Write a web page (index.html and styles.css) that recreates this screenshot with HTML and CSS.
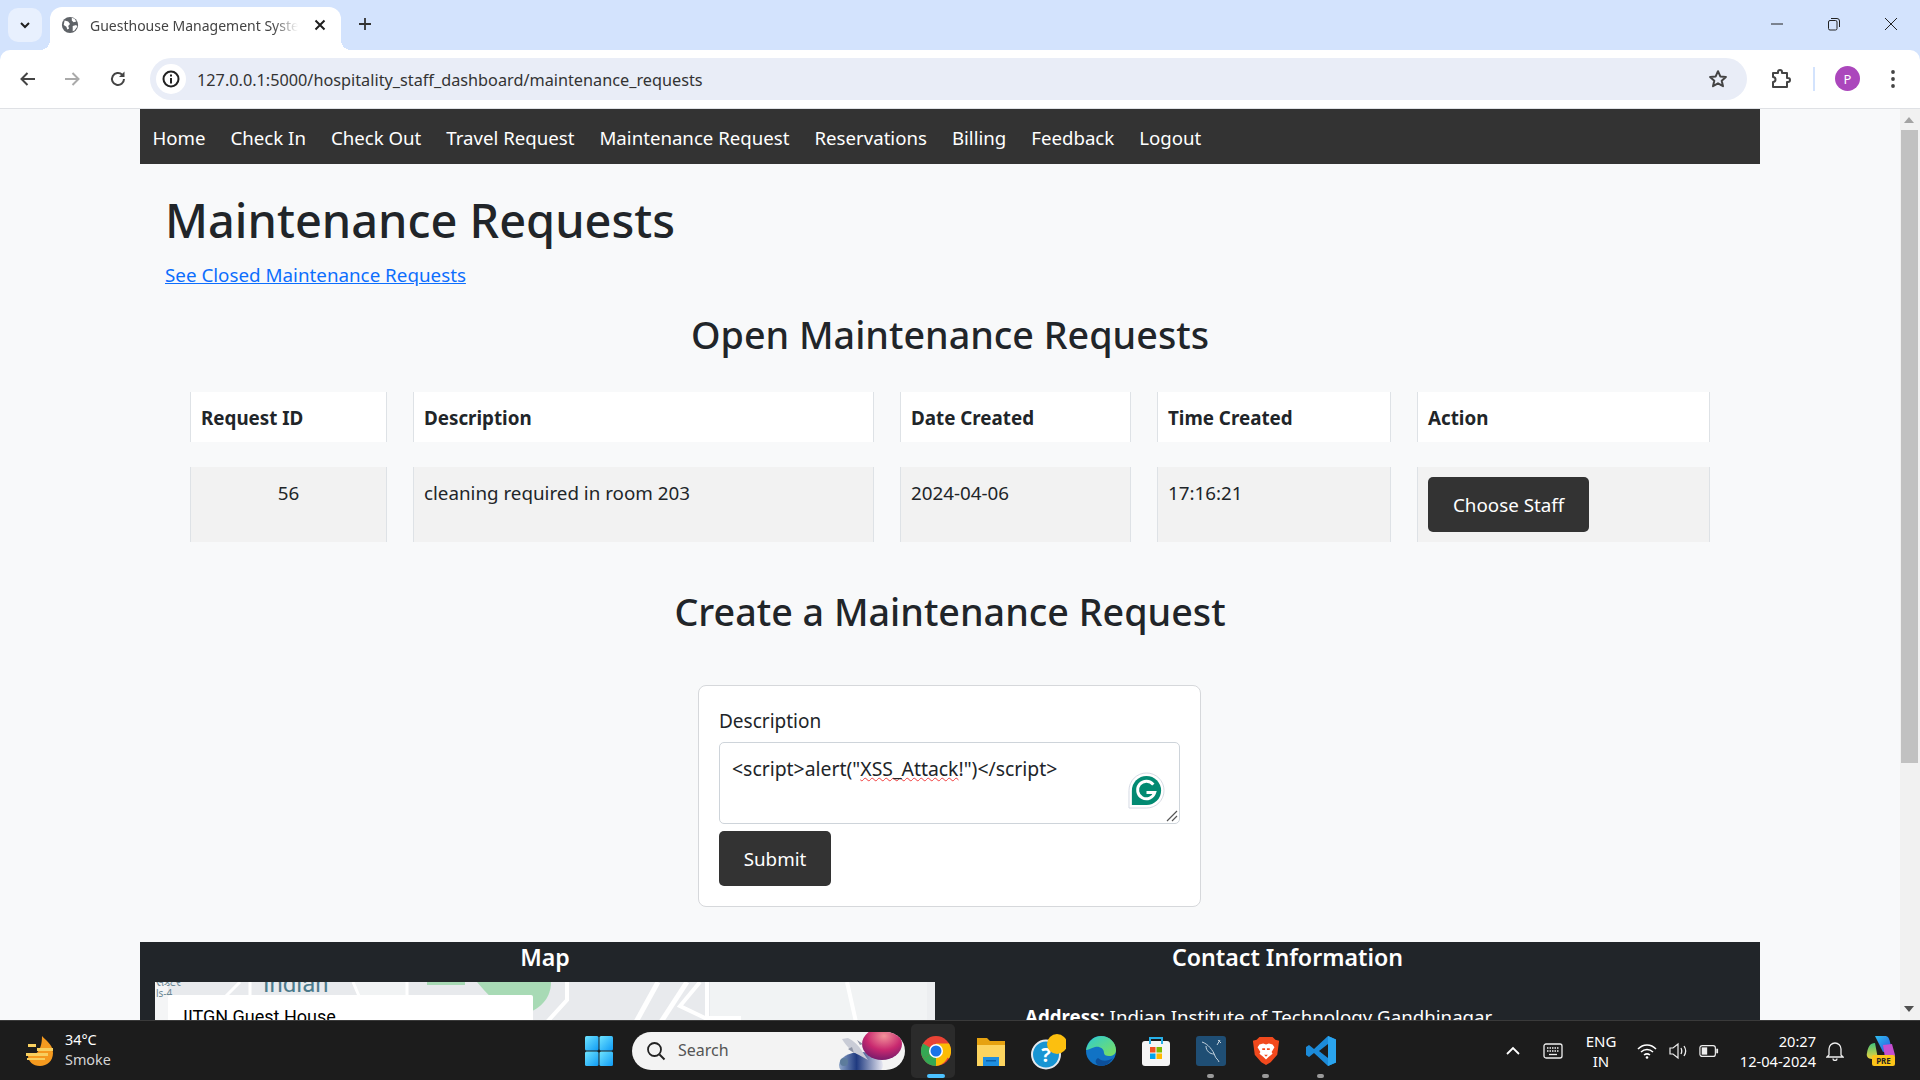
FILE: index.html
```html
<!DOCTYPE html>
<html lang="en">
<head>
<meta charset="UTF-8" />
<meta name="viewport" content="width=device-width, initial-scale=1" />
<title>Guesthouse Management System</title>
<link rel="stylesheet" href="styles.css">
</head>
<body>
  <!-- Browser tab strip -->
  <div class="tabstrip">
    <button class="tab-search" aria-label="Search tabs">
      <svg viewBox="0 0 16 16" class="icon-s"><path d="M4 6l4 4 4-4" fill="none" stroke="#1f1f1f" stroke-width="2"/></svg>
    </button>
    <div class="tab">
      <svg viewBox="0 0 20 20" class="favicon">
        <circle cx="10" cy="10" r="9" fill="#5f6368"/>
        <path d="M4 5l4 1 2 3-2 2 1 3-2 1-1-3-3-2zM12 2l3 1 2 3-3 1-2-2zM13 11l4-1 1 2-3 4-2 1z" fill="#fff"/>
      </svg>
      <span class="tab-title">Guesthouse Management System</span>
      <svg viewBox="0 0 16 16" class="icon-s tab-close"><path d="M3.5 3.5l9 9M12.5 3.5l-9 9" stroke="#1f1f1f" stroke-width="2"/></svg>
    </div>
    <svg viewBox="0 0 16 16" class="icon-s new-tab"><path d="M8 2v12M2 8h12" stroke="#333" stroke-width="1.8"/></svg>
    <div class="window-controls">
      <svg viewBox="0 0 14 14" class="win-icon"><path d="M1 7h12" stroke="#222" stroke-width="1"/></svg>
      <svg viewBox="0 0 14 14" class="win-icon"><rect x="1.5" y="3.5" width="8.5" height="9.5" rx="1.5" fill="none" stroke="#222"/><path d="M4 1.5h6a2.5 2.5 0 0 1 2.5 2.5v6" fill="none" stroke="#222"/></svg>
      <svg viewBox="0 0 14 14" class="win-icon"><path d="M1 1l12 12M13 1L1 13" stroke="#222" stroke-width="1"/></svg>
    </div>
  </div>

  <!-- Address bar -->
  <div class="toolbar">
    <svg viewBox="0 0 20 20" class="tool-icon"><path d="M17 10H4M9.5 4L3.5 10l6 6" fill="none" stroke="#444" stroke-width="2"/></svg>
    <svg viewBox="0 0 20 20" class="tool-icon"><path d="M3 10h13M10.5 4l6 6-6 6" fill="none" stroke="#aaa" stroke-width="2"/></svg>
    <svg viewBox="0 0 20 20" class="tool-icon"><path d="M16 10a6 6 0 1 1-1.8-4.3" fill="none" stroke="#444" stroke-width="2"/><path d="M16.5 2.5v5.5H11z" fill="#444"/></svg>
    <div class="omnibox">
      <span class="site-info">
        <svg viewBox="0 0 20 20" class="info-icon"><circle cx="10" cy="10" r="7.5" fill="none" stroke="#222" stroke-width="2"/><path d="M10 9v5.5M10 5.5v2" stroke="#222" stroke-width="2"/></svg>
      </span>
      <span class="url">127.0.0.1:5000/hospitality_staff_dashboard/maintenance_requests</span>
      <svg viewBox="0 0 20 20" class="star-icon"><path d="M10 2.2l2.3 5.2 5.6.5-4.2 3.8 1.3 5.5L10 14.3l-5 2.9 1.3-5.5-4.2-3.8 5.6-.5z" fill="none" stroke="#444" stroke-width="2" stroke-linejoin="round"/></svg>
    </div>
    <svg viewBox="0 0 22 22" class="puzzle-icon"><path d="M3 5h5V4a2 2 0 0 1 4 0v1h5v5h1a2 2 0 0 1 0 4h-1v5H3v-5a2.5 2.5 0 0 0 0-5z" fill="none" stroke="#444" stroke-width="2" stroke-linejoin="round"/></svg>
    <span class="toolbar-sep"></span>
    <span class="avatar">P</span>
    <svg viewBox="0 0 6 20" class="dots-icon"><circle cx="3" cy="3" r="1.9" fill="#444"/><circle cx="3" cy="10" r="1.9" fill="#444"/><circle cx="3" cy="17" r="1.9" fill="#444"/></svg>
  </div>

  <!-- Page viewport -->
  <div class="viewport">
    <div class="page">
      <nav class="navbar">
        <a href="#">Home</a>
        <a href="#">Check In</a>
        <a href="#">Check Out</a>
        <a href="#">Travel Request</a>
        <a href="#">Maintenance Request</a>
        <a href="#">Reservations</a>
        <a href="#">Billing</a>
        <a href="#">Feedback</a>
        <a href="#">Logout</a>
      </nav>

      <main class="content">
        <h1>Maintenance Requests</h1>
        <a class="closed-link" href="#">See Closed Maintenance Requests</a>
        <h2 class="section-title open-title">Open Maintenance Requests</h2>

        <table class="requests">
          <colgroup>
            <col class="col-id"><col class="col-desc"><col class="col-date"><col class="col-time"><col class="col-action">
          </colgroup>
          <thead>
            <tr>
              <th>Request ID</th>
              <th>Description</th>
              <th>Date Created</th>
              <th>Time Created</th>
              <th>Action</th>
            </tr>
          </thead>
          <tbody>
            <tr>
              <td class="cell-id">56</td>
              <td>cleaning required in room 203</td>
              <td>2024-04-06</td>
              <td>17:16:21</td>
              <td><button class="btn">Choose Staff</button></td>
            </tr>
          </tbody>
        </table>

        <h2 class="section-title create-title">Create a Maintenance Request</h2>

        <form class="request-form">
          <label class="form-label">Description</label>
          <div class="fake-textarea">
            &lt;script&gt;alert("<span class="typo">XSS_Attack</span>!")&lt;/script&gt;
            <svg viewBox="0 0 38 38" class="grammarly">
              <path d="M19 1a18 18 0 0 1 0 36H1V19A18 18 0 0 1 19 1z" fill="#fff" stroke="#d5d9e3" stroke-width="1"/>
              <path d="M19 4a15 15 0 0 1 0 30H4V19A15 15 0 0 1 19 4z" fill="#028a72"/>
              <path d="M26 13a9 9 0 1 0 1.500 8H19" fill="none" stroke="#fff" stroke-width="3"/>
            </svg>
            <svg viewBox="0 0 12 12" class="resize-grip"><path d="M1 11L11 1M6 11l5-5" stroke="#555" stroke-width="1.2"/></svg>
          </div>
          <button class="btn submit-btn" type="button">Submit</button>
        </form>
      </main>

      <footer class="footer">
        <section class="footer-map">
          <h3>Map</h3>
          <div class="map">
            <svg viewBox="0 0 780 60" class="map-art">
              <rect width="780" height="60" fill="#e8eaed"/>
              <rect width="13" height="60" fill="#f4f5f6"/>
              <path d="M555 0h225v60H555z" fill="#f1f3f4"/>
              <path d="M198 0h54v13h-48z" fill="#f1f3f4"/>
              <path d="M772 0h8v60h-8z" fill="#eceef0"/>
              <rect x="272" y="0" width="38" height="3" fill="#a8dab5"/>
              <path d="M322 0h74c0 14-8 26-26 32-20-2-35-16-48-32z" fill="#a8dab5"/>
              <path d="M85 0L70 15M95 0v15M198 0l6 14M252 0v14" fill="none" stroke="#fff" stroke-width="3"/>
              <path d="M412 0v18l-20 22" fill="none" stroke="#fff" stroke-width="4"/>
              <path d="M503 0l-22 40M532 0l-26 40" fill="none" stroke="#fff" stroke-width="5"/>
              <path d="M545 0l-20 24 25 12h36M552 0v34" fill="none" stroke="#fff" stroke-width="4"/>
              <path d="M692 0l9 40" fill="none" stroke="#fff" stroke-width="4"/>
              <text x="108" y="10" class="map-label">Indian</text>
              <text x="1" y="4" class="map-small">સેક્ટર</text>
              <text x="1" y="15" class="map-small">ls-4</text>
            </svg>
            <div class="map-card">IITGN Guest House</div>
          </div>
        </section>
        <section class="footer-contact">
          <h3>Contact Information</h3>
          <p class="address"><strong>Address:</strong> Indian Institute of Technology Gandhinagar</p>
        </section>
      </footer>
    </div>

    <div class="scrollbar">
      <span class="arrow-up"></span>
      <span class="thumb"></span>
      <span class="arrow-down"></span>
    </div>
  </div>

  <!-- Windows taskbar -->
  <div class="taskbar">
    <div class="weather">
      <svg viewBox="0 0 34 34" class="weather-icon">
        <path d="M19 2c3 4 11 8 11 17 0 8-6 13-13 13S5 27 5 22c6 0 14-3 14-20z" fill="#f59a1f"/>
        <path d="M5 10h8v3H5zM14 14h16v3H14zM3 19h22v3H3zM4 24h18v2H4z" fill="#f8cf5f"/>
      </svg>
      <div class="weather-text">
        <span>34°C</span>
        <span class="weather-sub">Smoke</span>
      </div>
    </div>

    <div class="task-center">
      <svg viewBox="0 0 28 30" class="start-icon">
        <defs><linearGradient id="win" x1="0" y1="0" x2="1" y2="1"><stop offset="0" stop-color="#6fe4ff"/><stop offset="1" stop-color="#0f9bf5"/></linearGradient></defs>
        <rect x="0" y="0" width="13.500" height="14.500" rx="1.500" fill="url(#win)"/>
        <rect x="14.500" y="0" width="13.500" height="14.500" rx="1.500" fill="url(#win)"/>
        <rect x="0" y="15.500" width="13.500" height="14.500" rx="1.500" fill="url(#win)"/>
        <rect x="14.500" y="15.500" width="13.500" height="14.500" rx="1.500" fill="url(#win)"/>
      </svg>
      <div class="searchbox">
        <svg viewBox="0 0 20 20" class="search-icon"><circle cx="8.500" cy="8.500" r="6.500" fill="none" stroke="#222" stroke-width="1.800"/><path d="M13.500 13.500l5 5" stroke="#222" stroke-width="2"/></svg>
        <span class="search-text">Search</span>
        <svg viewBox="0 0 66 38" class="search-art">
          <defs>
            <radialGradient id="planet" cx=".55" cy=".25" r=".8"><stop offset="0" stop-color="#f3939a"/><stop offset=".55" stop-color="#c8286f"/><stop offset="1" stop-color="#6d1a6b"/></radialGradient>
            <linearGradient id="ground" x1="0" y1="0" x2="1" y2="0"><stop offset="0" stop-color="#8fa6c8"/><stop offset=".4" stop-color="#1f3a80"/><stop offset="1" stop-color="#e8e8f2"/></linearGradient>
          </defs>
          <ellipse cx="22" cy="33" rx="22" ry="13" fill="url(#ground)"/>
          <ellipse cx="43" cy="12" rx="20" ry="16" fill="url(#planet)"/>
          <path d="M3 7l6-1c6 3 11 8 14 13l6 9-9-5C13 20 7 14 3 7z" fill="#c9ccd6"/>
          <path d="M9 17l4-2 2 6zM18 8l3 5 3-1z" fill="#8d93a5"/>
          <circle cx="5" cy="30" r="4" fill="#5d7c9c"/>
        </svg>
      </div>
      <div class="task-app is-active">
        <svg viewBox="0 0 30 30" class="app-icon">
          <circle cx="15" cy="15" r="15" fill="#ea4335"/>
          <path d="M15 15L2 22.500A15 15 0 0 1 2 7.500z" fill="#34a853"/>
          <path d="M15 15L2 22.500A15 15 0 0 0 15 30z" fill="#34a853"/>
          <path d="M15 15h13A15 15 0 0 1 15 30z" fill="#fbbc04"/>
          <path d="M15 7.500h13A15 15 0 0 1 28 22.500L15 15z" fill="#fbbc04"/>
          <circle cx="15" cy="15" r="7" fill="#fff"/>
          <circle cx="15" cy="15" r="5.500" fill="#1a73e8"/>
        </svg>
        <span class="app-dot dot-active"></span>
      </div>
      <div class="task-app">
        <svg viewBox="0 0 30 30" class="app-icon">
          <path d="M1 2h10l3 3h15v6H1z" fill="#e6a210"/>
          <path d="M1 9h28v21H1z" fill="#fcd45f"/>
          <path d="M7 21h16v9H7z" fill="#1f8fe0"/>
          <path d="M10 24h10v1.500H10z" fill="#0b5fa8"/>
        </svg>
      </div>
      <div class="task-app">
        <svg viewBox="0 -4 40 40" class="app-icon help-icon">
          <circle cx="20" cy="19.500" r="14" fill="#1895d3" stroke="#e5e9ee" stroke-width="2"/>
          <text x="20" y="27" class="help-mark">?</text>
          <circle cx="31" cy="9" r="10" fill="#fcbf0f"/>
        </svg>
      </div>
      <div class="task-app">
        <svg viewBox="0 0 30 30" class="app-icon">
          <defs><linearGradient id="edge" x1="0" y1="0" x2="1" y2="1"><stop offset="0" stop-color="#2ecbd2"/><stop offset="1" stop-color="#7ce05c"/></linearGradient></defs>
          <circle cx="15" cy="15" r="15" fill="#1173c5"/>
          <path d="M0 14C2 5 8 0 15 0c9 0 15 7 15 14 0 4-3 6-7 6-3 0-5-1-5-3 0-5-5-7-9-6-4 1-7 3-9 3z" fill="url(#edge)"/>
          <path d="M12 22c3 3 9 4 15 0-3 5-7 8-12 8-2 0-4-1-5-3-1-2 0-4 2-5z" fill="#0c4f9a"/>
        </svg>
      </div>
      <div class="task-app">
        <svg viewBox="0 0 30 30" class="app-icon">
          <rect x="1" y="5" width="28" height="25" rx="3" fill="#f5f5f5"/>
          <path d="M9 8V2h12v6" fill="none" stroke="#27b0e8" stroke-width="2"/>
          <rect x="9" y="11" width="5.500" height="5.500" fill="#f25022"/>
          <rect x="15.500" y="11" width="5.500" height="5.500" fill="#7fba00"/>
          <rect x="9" y="17.500" width="5.500" height="5.500" fill="#00a4ef"/>
          <rect x="15.500" y="17.500" width="5.500" height="5.500" fill="#ffb900"/>
        </svg>
      </div>
      <div class="task-app">
        <svg viewBox="0 0 30 30" class="app-icon">
          <rect width="30" height="30" rx="3" fill="#1f4e74"/>
          <path d="M6 6c6 2 11 8 13 14 1 3 3 3 4 6M10 10c0 5 4 8 8 8M22 4l3 3M24 4l-3 5" fill="none" stroke="#c4d3df" stroke-width="1"/>
        </svg>
        <span class="app-dot"></span>
      </div>
      <div class="task-app">
        <svg viewBox="0 0 30 32" class="app-icon">
          <path d="M8 1h14l3 3 4 1-2 15-7 8-5 3-5-3-7-8L1 5l4-1z" fill="#f1491d"/>
          <path d="M8 9l4-1 3 1 3-1 4 1 2 3-3 5 1 2-4 3-3 3-3-3-4-3 1-2-3-5z" fill="#fff"/>
          <path d="M11 13h3v2h-3zM16 13h3v2h-3zM13 20h4l-2 2z" fill="#f1491d"/>
        </svg>
        <span class="app-dot"></span>
      </div>
      <div class="task-app">
        <svg viewBox="0 0 30 30" class="app-icon">
          <path d="M22 0l8 3.500v23L22 30 8 17l-5 4-3-2v-8l3-2 5 4z" fill="#1c8bd9"/>
          <path d="M22 8v14l-9-7z" fill="#1c1c1c"/>
          <path d="M22 0l8 3.500v23L22 30z" fill="#2aa4ee"/>
        </svg>
        <span class="app-dot"></span>
      </div>
    </div>

    <div class="tray">
      <svg viewBox="0 0 16 10" class="chevron-icon"><path d="M2 8l6-6 6 6" fill="none" stroke="#fff" stroke-width="1.800"/></svg>
      <svg viewBox="0 0 20 16" class="kbd-icon"><rect x="1" y="1" width="18" height="14" rx="2" fill="none" stroke="#eee" stroke-width="1.300"/><path d="M4 5h12M4 8h12" stroke="#eee" stroke-dasharray="1.500 1" stroke-width="1.500"/><path d="M6 11.500h8" stroke="#eee" stroke-width="1.300"/></svg>
      <div class="lang"><span>ENG</span><span>IN</span></div>
      <svg viewBox="0 0 20 16" class="tray-icon wifi-icon"><path d="M1 6c5-5.500 13-5.500 18 0M4 9c3.500-3.500 8.500-3.500 12 0M7 12c2-1.500 4-1.500 6 0" fill="none" stroke="#fff" stroke-width="1.500"/><circle cx="10" cy="14.500" r="1.300" fill="#fff"/></svg>
      <svg viewBox="0 0 20 18" class="tray-icon vol-icon"><path d="M2 6h3l5-4v14l-5-4H2z" fill="none" stroke="#eee" stroke-width="1.200"/><path d="M13 6c1 2 1 4 0 6M16 4c2 3 2 7 0 10" fill="none" stroke="#eee" stroke-width="1.300"/></svg>
      <svg viewBox="0 0 22 14" class="tray-icon batt-icon"><rect x="1" y="1" width="17" height="12" rx="2.500" fill="none" stroke="#eee" stroke-width="1.300"/><rect x="3" y="3" width="6" height="8" fill="#eee"/><path d="M20 4.500v5" stroke="#eee" stroke-width="2"/></svg>
      <div class="clock"><span>20:27</span><span>12-04-2024</span></div>
      <svg viewBox="0 0 18 20" class="bell-icon"><path d="M3 14V8a6 6 0 0 1 12 0v6l2 2H1zM7 17.500a2 2 0 0 0 4 0" fill="none" stroke="#eee" stroke-width="1.300"/></svg>
      <svg viewBox="0 0 30 32" class="copilot-icon">
        <defs>
          <linearGradient id="cop-a" x1="0" y1="0" x2="1" y2="1"><stop offset="0" stop-color="#2fc0f0"/><stop offset="1" stop-color="#2a4fe0"/></linearGradient>
          <linearGradient id="cop-b" x1="0" y1="0" x2="0" y2="1"><stop offset="0" stop-color="#3fc47a"/><stop offset="1" stop-color="#f2d13a"/></linearGradient>
        </defs>
        <path d="M1 18C2 12 4 8 9 8l3 16H6c-4 0-6-3-5-6z" fill="url(#cop-b)"/>
        <path d="M9 1h10c3 0 4 2 5 6l2 8-9 2z" fill="url(#cop-a)"/>
        <path d="M17 10l9-1 3 11c0 2-2 3-3 3h-7z" fill="#c54fd0"/>
        <rect x="6" y="20" width="23" height="11" rx="2" fill="#fcc419"/>
        <text x="17.500" y="29" class="pre-mark">PRE</text>
      </svg>
    </div>
  </div>
</body>
</html>
```

FILE: styles.css
```css
/* Reset */
* {
  margin: 0;
  padding: 0;
  box-sizing: border-box;
}

html, body {
  width: 1920px;
  height: 1080px;
  overflow: hidden;
}

body {
  display: flex;
  flex-direction: column;
  font-family: "Noto Sans", "Open Sans", sans-serif;
  color: #212529;
  background: #d3e3fd;
}

/* Tab strip */
.tabstrip {
  height: 50px;
  flex: none;
  background: #d3e3fd;
  display: flex;
  align-items: flex-end;
  padding-left: 8px;
}

.tab-search {
  width: 34px;
  height: 34px;
  margin-bottom: 8px;
  margin-right: 8px;
  border: none;
  border-radius: 10px;
  background: #e8f0fe;
  display: flex;
  align-items: center;
  justify-content: center;
}

.icon-s {
  width: 16px;
  height: 16px;
  flex: none;
}

.tab {
  position: relative;
  width: 291px;
  height: 43px;
  background: #fff;
  border-radius: 12px 12px 0 0;
  display: flex;
  align-items: center;
  padding: 0 13px 7px 11px;
}

/* concave corners at the foot of the active tab */
.tab::before,
.tab::after {
  content: "";
  position: absolute;
  bottom: 0;
  width: 10px;
  height: 10px;
}

.tab::before {
  left: -10px;
  background: radial-gradient(circle at 0 0, transparent 10px, #fff 10px);
}

.tab::after {
  right: -10px;
  background: radial-gradient(circle at 100% 0, transparent 10px, #fff 10px);
}

.favicon {
  width: 18px;
  height: 18px;
  flex: none;
}

.tab-title {
  width: 208px;
  margin-left: 11px;
  font-size: 14px;
  color: #444;
  white-space: nowrap;
  overflow: hidden;
  -webkit-mask-image: linear-gradient(to right, #000 88%, transparent);
  mask-image: linear-gradient(to right, #000 88%, transparent);
}

.tab-close {
  margin-left: auto;
}

.new-tab {
  margin: 0 0 18px 16px;
}

.window-controls {
  margin-left: auto;
  align-self: flex-start;
  display: flex;
  gap: 43px;
  padding: 17px 22px 0 0;
}

.win-icon {
  width: 14px;
  height: 14px;
}

/* Toolbar */
.toolbar {
  height: 59px;
  flex: none;
  background: #fff;
  border-bottom: 1px solid #dfe1e5;
  display: flex;
  align-items: center;
  padding: 0 0 1px 18px;
  border-radius: 10px 10px 0 0;
}

.tool-icon {
  width: 20px;
  height: 20px;
  margin-right: 24px;
  flex: none;
}

.tool-icon:nth-child(3) {
  margin-right: 22px;
  margin-left: 2px;
}

.omnibox {
  width: 1597px;
  height: 42px;
  border-radius: 21px;
  background: #e9edf7;
  display: flex;
  align-items: center;
  padding: 0 19px 0 6px;
}

.site-info {
  width: 30px;
  height: 30px;
  border-radius: 50%;
  background: #fff;
  display: flex;
  align-items: center;
  justify-content: center;
  flex: none;
}

.info-icon {
  width: 20px;
  height: 20px;
}

.url {
  margin-left: 11px;
  padding-top: 2px;
  font-size: 16.25px;
  color: #333;
}

.star-icon {
  width: 20px;
  height: 20px;
  margin-left: auto;
}

.puzzle-icon {
  width: 22px;
  height: 22px;
  margin-left: 23px;
  flex: none;
}

.toolbar-sep {
  width: 2px;
  height: 24px;
  margin-left: 21px;
  background: #d3e3fd;
}

.avatar {
  width: 25px;
  height: 25px;
  margin-left: 20px;
  border-radius: 50%;
  background: #ab47bc;
  color: #fff;
  font-size: 13px;
  display: flex;
  align-items: center;
  justify-content: center;
  flex: none;
}

.dots-icon {
  width: 6px;
  height: 20px;
  margin-left: 30px;
  flex: none;
}

/* Page area */
.viewport {
  flex: 1;
  min-height: 0;
  display: flex;
  overflow: hidden;
  background: #f8f9fa;
}

.page {
  width: 1900px;
  flex: none;
  padding: 0 140px;
}

.navbar {
  height: 55px;
  background: #333;
  display: flex;
  padding-top: 1px;
  align-items: center;
}

.navbar a {
  color: #fff;
  font-size: 18.65px;
  text-decoration: none;
  padding: 0 12.5px;
}

.content {
  height: 778px;
  padding: 27px 25px 0;
}

h1 {
  font-size: 46.9px;
  font-weight: 500;
  line-height: 58px;
}

.closed-link {
  display: block;
  width: max-content;
  margin-top: 11px;
  font-size: 18.8px;
  line-height: 30px;
  color: #0d6efd;
}

.section-title {
  font-size: 37.7px;
  font-weight: 500;
  line-height: 48px;
  text-align: center;
}

.open-title {
  margin-top: 21px;
}

.create-title {
  margin-top: 21px;
}

/* Requests table */
.requests {
  width: 1572px;
  margin: 8px 0 0 -1px;
  border-collapse: separate;
  border-spacing: 26px 25px;
  table-layout: fixed;
  font-size: 18.8px;
}

.col-id { width: 197px; }
.col-desc { width: 461px; }
.col-date { width: 231px; }
.col-time { width: 234px; }
.col-action { width: 293px; }

.requests th,
.requests td {
  padding: 11px 10px 9px;
  text-align: left;
  vertical-align: top;
  line-height: 30px;
  border-left: 1px solid #dee2e6;
  border-right: 1px solid #dee2e6;
}

.requests th {
  height: 50px;
  background: #fff;
  font-weight: 700;
}

.requests td {
  height: 75px;
  background: #f2f2f2;
  font-weight: 400;
}

.requests td.cell-id {
  text-align: center;
}

.btn {
  height: 55px;
  padding: 0 25px;
  border: none;
  border-radius: 5px;
  background: #333;
  color: #fff;
  font-family: inherit;
  font-size: 18.8px;
}

.requests .btn {
  display: block;
  margin-top: -1px;
}

/* Create form */
.request-form {
  width: 503px;
  height: 222px;
  margin: 49px 0 0 533px;
  padding: 20px;
  background: #fff;
  border: 1px solid #d6d8db;
  border-radius: 8px;
}

.form-label {
  display: block;
  font-size: 19px;
  line-height: 30px;
}

.fake-textarea {
  position: relative;
  height: 82px;
  margin-top: 6px;
  padding: 11px 12px;
  border: 1px solid #ced4da;
  border-radius: 5px;
  font-size: 19.4px;
  line-height: 30px;
}

.typo {
  text-decoration: underline wavy #f03e3e 1px;
}

.grammarly {
  position: absolute;
  right: 14px;
  bottom: 14px;
  width: 37px;
  height: 37px;
}

.resize-grip {
  position: absolute;
  right: 1px;
  bottom: 1px;
  width: 12px;
  height: 12px;
}

.submit-btn {
  display: block;
  width: 112px;
  margin-top: 7px;
  padding: 0;
}

/* Footer */
.footer {
  height: 200px;
  background: #212529;
  color: #fff;
  display: flex;
}

.footer h3 {
  font-size: 23.2px;
  font-weight: 600;
  line-height: 30px;
  text-align: center;
}

.footer-map {
  width: 810px;
  padding: 0 15px;
}

.map {
  position: relative;
  width: 780px;
  height: 160px;
  margin-top: 10px;
  overflow: hidden;
  background: #e8eaed;
}

.map-art {
  display: block;
  width: 780px;
  height: 60px;
}

.map-label {
  font-size: 24px;
  font-family: "Roboto", sans-serif;
  font-weight: 400;
  fill: #4b7a8c;
}

.map-small {
  font-size: 10px;
  font-family: "Noto Sans", sans-serif;
  fill: #6b8793;
}

.map-card {
  position: absolute;
  left: 13px;
  top: 13px;
  width: 365px;
  height: 120px;
  padding: 11px 15px;
  background: #fff;
  border-radius: 2px;
  color: #000;
  font-family: "Roboto", sans-serif;
  font-size: 18px;
  font-weight: 400;
}

.footer-contact {
  width: 675px;
}

.address {
  margin-top: 30px;
  padding-left: 75px;
  font-size: 18.7px;
  line-height: 30px;
}

/* Fake scrollbar */
.scrollbar {
  width: 20px;
  flex: none;
  background: #f1f1f1;
  display: flex;
  flex-direction: column;
  align-items: flex-start;
  padding: 8px 0 8px 1px;
}

.thumb {
  width: 17px;
  height: 633px;
  margin-top: 7px;
  background: #c1c1c1;
}

.arrow-up {
  width: 0;
  height: 0;
  margin-left: 3px;
  border-left: 5px solid transparent;
  border-right: 5px solid transparent;
  border-bottom: 6px solid #a3a3a3;
}

.arrow-down {
  width: 0;
  height: 0;
  margin-top: auto;
  margin-left: 3px;
  border-left: 5px solid transparent;
  border-right: 5px solid transparent;
  border-top: 6px solid #505050;
}

/* Windows taskbar */
.taskbar {
  height: 60px;
  flex: none;
  background: #1c1c1c;
  border-top: 1px solid #3a3a3a;
  color: #fff;
  display: flex;
  align-items: center;
}

.weather {
  width: 585px;
  display: flex;
  align-items: center;
  padding-left: 23px;
  flex: none;
}

.weather-icon {
  width: 34px;
  height: 34px;
  flex: none;
}

.weather-text {
  display: flex;
  flex-direction: column;
  margin: -2px 0 0 8px;
  font-size: 14.4px;
  line-height: 20px;
}

.weather-sub {
  color: #d5d5d5;
}

.task-center {
  display: flex;
  align-items: center;
  width: 758px;
  flex: none;
}

.start-icon {
  width: 28px;
  height: 30px;
  flex: none;
}

.searchbox {
  width: 273px;
  height: 38px;
  margin-left: 19px;
  border-radius: 19px;
  background: #f3f3f3;
  display: flex;
  align-items: center;
  padding-left: 14px;
  overflow: hidden;
  flex: none;
}

.search-icon {
  width: 20px;
  height: 20px;
  flex: none;
}

.search-text {
  margin-left: 12px;
  margin-top: -1px;
  font-size: 16px;
  color: #555;
}

.search-art {
  width: 66px;
  height: 38px;
  margin-left: auto;
  flex: none;
}

.task-app {
  position: relative;
  width: 55px;
  height: 54px;
  display: flex;
  align-items: center;
  justify-content: center;
  flex: none;
}

.task-app.is-active {
  width: 44px;
  margin: 0 8.5px 0 6px;
  padding-left: 6px;
  border-radius: 5px;
  background: #2b2b2b;
}

.app-icon {
  width: 30px;
  height: 30px;
}

.task-app .help-icon {
  width: 40px;
  height: 40px;
}

.help-mark {
  font-family: "Noto Sans", sans-serif;
  font-size: 20px;
  font-weight: 700;
  fill: #fff;
  text-anchor: middle;
}

.app-dot {
  position: absolute;
  left: 50%;
  bottom: 0;
  width: 7px;
  height: 4px;
  margin-left: -4px;
  border-radius: 2px;
  background: #9a9a9a;
}

.app-dot.dot-active {
  width: 18px;
  margin-left: -6px;
  background: #4cc2ff;
}

.tray {
  flex: 1;
  display: flex;
  align-items: center;
  padding-left: 161.5px;
}

.chevron-icon {
  width: 16px;
  height: 10px;
  flex: none;
}

.kbd-icon {
  width: 20px;
  height: 16px;
  margin-left: 22.5px;
  flex: none;
}

.lang {
  width: 40px;
  margin-left: 18px;
  display: flex;
  flex-direction: column;
  align-items: center;
  font-size: 15px;
  line-height: 20px;
}

.tray-icon {
  width: 20px;
  height: 18px;
  flex: none;
}

.wifi-icon {
  margin-left: 16px;
}

.vol-icon {
  margin-left: 11px;
}

.batt-icon {
  margin-left: 10.5px;
}

.clock {
  width: 92px;
  margin-left: 5.5px;
  display: flex;
  flex-direction: column;
  align-items: flex-end;
  font-size: 14.6px;
  line-height: 20px;
}

.bell-icon {
  width: 18px;
  height: 20px;
  margin-left: 10px;
  flex: none;
}

.copilot-icon {
  width: 30px;
  height: 32px;
  margin-left: 21.5px;
  flex: none;
}

.pre-mark {
  font-family: "Noto Sans", sans-serif;
  font-size: 8px;
  font-weight: 700;
  fill: #222;
  text-anchor: middle;
}
```
